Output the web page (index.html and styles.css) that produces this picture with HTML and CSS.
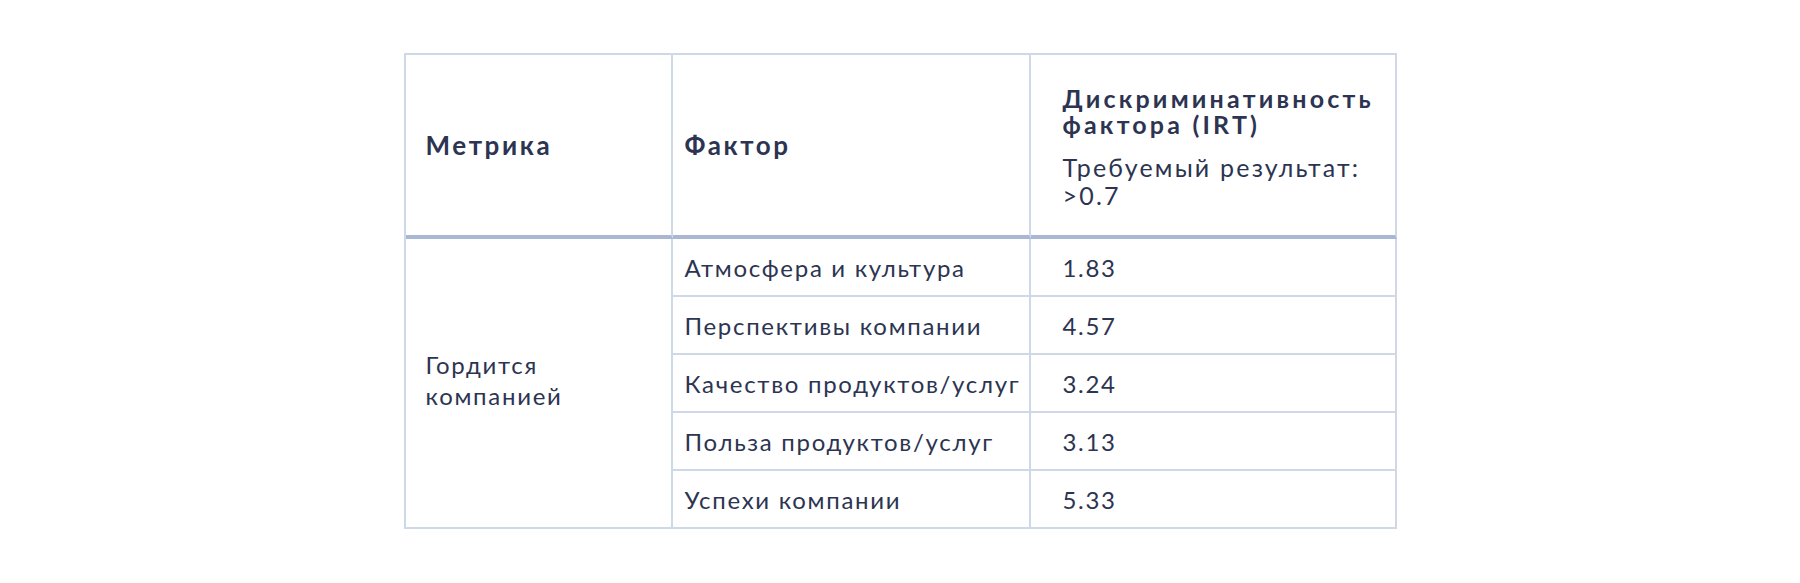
FILE: index.html
```html
<!DOCTYPE html>
<html lang="ru">
<head>
<meta charset="utf-8">
<title>Дискриминативность факторов</title>
<link rel="stylesheet" href="styles.css">
</head>
<body>
<main class="page">
  <table class="metrics">
    <colgroup>
      <col class="c-metric">
      <col class="c-factor">
      <col class="c-value">
    </colgroup>
    <thead>
      <tr>
        <th class="cell-metric">Метрика</th>
        <th class="cell-factor">Фактор</th>
        <th class="cell-value">
          <div class="head-title">Дискриминативность фактора (IRT)</div>
          <div class="head-note">Требуемый результат: &gt;0.7</div>
        </th>
      </tr>
    </thead>
    <tbody>
      <tr>
        <td class="cell-metric cell-group" rowspan="5">Гордится<br>компанией</td>
        <td class="cell-factor">Атмосфера и культура</td>
        <td class="cell-value">1.83</td>
      </tr>
      <tr>
        <td class="cell-factor">Перспективы компании</td>
        <td class="cell-value">4.57</td>
      </tr>
      <tr>
        <td class="cell-factor">Качество продуктов/услуг</td>
        <td class="cell-value">3.24</td>
      </tr>
      <tr>
        <td class="cell-factor">Польза продуктов/услуг</td>
        <td class="cell-value">3.13</td>
      </tr>
      <tr>
        <td class="cell-factor">Успехи компании</td>
        <td class="cell-value">5.33</td>
      </tr>
    </tbody>
  </table>
</main>
</body>
</html>
```

FILE: styles.css
```css
html, body {
  margin: 0;
  padding: 0;
  background: #ffffff;
}

body {
  font-family: "Lato", "Noto Sans", sans-serif;
  color: #2c3451;
}

.page {
  display: flex;
  justify-content: center;
  padding-top: 53px;
}

.metrics {
  border-collapse: separate;
  border-spacing: 0;
  width: 991px;
  table-layout: fixed;
  border-top: 2px solid #cfd8e6;
  border-left: 2px solid #cfd8e6;
}

.c-metric { width: 267px; }
.c-factor { width: 358px; }
.c-value { width: 366px; }

.metrics th,
.metrics td {
  border-right: 2px solid #cfd8e6;
  border-bottom: 2px solid #cfd8e6;
  text-align: left;
  vertical-align: middle;
  font-size: 24px;
  line-height: 31px;
  letter-spacing: 1.7px;
}

.metrics th {
  font-weight: 700;
  font-size: 26px;
  letter-spacing: 2.6px;
  height: 180px;
  padding: 0;
  border-bottom: 4px solid #a8b7d3;
}

.metrics td {
  font-weight: 400;
  height: 56px;
  padding: 0;
  box-sizing: content-box;
}

.cell-metric { padding-left: 20px !important; }
.cell-factor { padding-left: 12px !important; }
.cell-value { padding-left: 32px !important; padding-right: 12px !important; }

.metrics td.cell-group {
  padding-bottom: 7px;
}

.head-title {
  font-weight: 700;
  font-size: 25px;
  letter-spacing: 3.2px;
  line-height: 26px;
  margin-top: 3px;
}

.head-note {
  font-weight: 400;
  font-size: 25px;
  letter-spacing: 2.2px;
  margin-top: 16px;
  line-height: 28px;
}
```
